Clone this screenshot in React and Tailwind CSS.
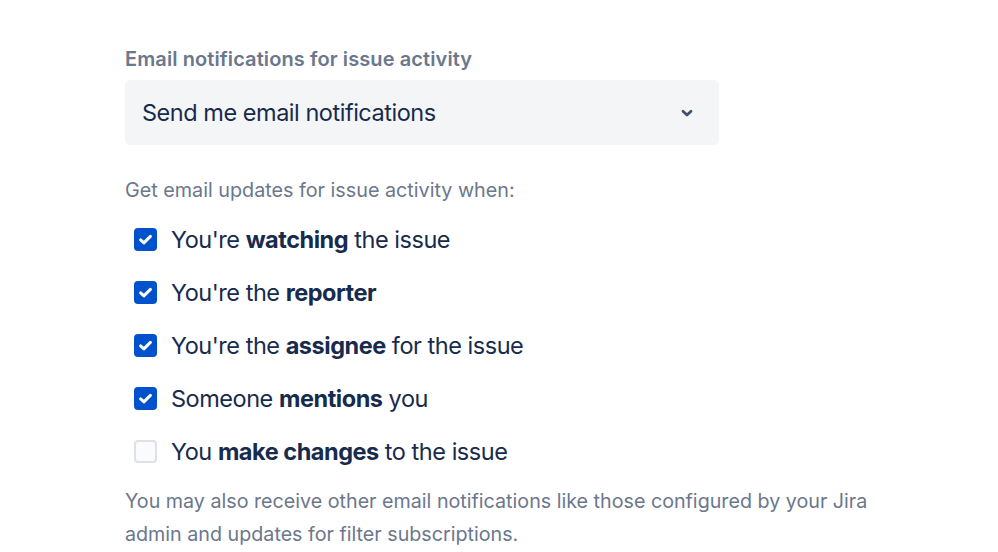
import React from "react";

function Check({ checked }) {
  return checked ? (
    <span className="flex h-[23px] w-[23px] shrink-0 items-center justify-center rounded-[4px] bg-[#0052CC]">
      <svg width="23" height="23" viewBox="0 0 23 23" fill="none">
        <path d="M6.6 11.9 L9.9 14.9 L16.4 8.4" stroke="white" strokeWidth="3" strokeLinecap="round" strokeLinejoin="round" />
      </svg>
    </span>
  ) : (
    <span className="h-[23px] w-[23px] shrink-0 rounded-[4px] border-2 border-[#DFE1E6] bg-[#FAFBFC]" />
  );
}

const rows = [
  { c: true, parts: ["You're ", "watching", " the issue"] },
  { c: true, parts: ["You're the ", "reporter", ""] },
  { c: true, parts: ["You're the ", "assignee", " for the issue"] },
  { c: true, parts: ["Someone ", "mentions", " you"] },
  { c: false, parts: ["You ", "make changes", " to the issue"] },
];

export default function App() {
  return (
    <div className="h-[552px] w-[998px] overflow-hidden bg-white font-['Inter',sans-serif]">
      <div className="flex flex-col pl-[125px] pt-[45px]">
        <div className="text-[20px] font-semibold leading-[28px] tracking-[0.005em] text-[#6B778C]">
          Email notifications for issue activity
        </div>
        <div className="mt-[7px] flex h-[65px] w-[594px] items-center justify-between rounded-[5px] bg-[#F4F5F7] pl-[17px] pr-[24px]">
          <span className="text-[23.5px] leading-[30px] tracking-[-0.02em] text-[#172B4D]">Send me email notifications</span>
          <svg width="16" height="16" viewBox="0 0 16 16" fill="none">
            <path d="M4 6.2 L8 10 L12 6.2" stroke="#42526E" strokeWidth="2.8" strokeLinecap="round" strokeLinejoin="round" />
          </svg>
        </div>
        <div className="mt-[31px] text-[19.75px] leading-[28px] text-[#6B778C]">
          Get email updates for issue activity when:
        </div>
        <div className="mt-[9px] flex flex-col">
          {rows.map((r, i) => (
            <div key={i} className="flex h-[53px] items-center gap-[14px] pl-[9px]">
              <Check checked={r.c} />
              <span className="text-[23.5px] leading-[30px] tracking-[-0.02em] text-[#172B4D]">
                {r.parts[0]}
                <b className="font-bold">{r.parts[1]}</b>
                {r.parts[2]}
              </span>
            </div>
          ))}
        </div>
        <div className="mt-[7px] w-[760px] text-[19.7px] leading-[33px] text-[#6B778C]">
          You may also receive other email notifications like those configured by your Jira admin and updates for filter subscriptions.
        </div>
      </div>
    </div>
  );
}
